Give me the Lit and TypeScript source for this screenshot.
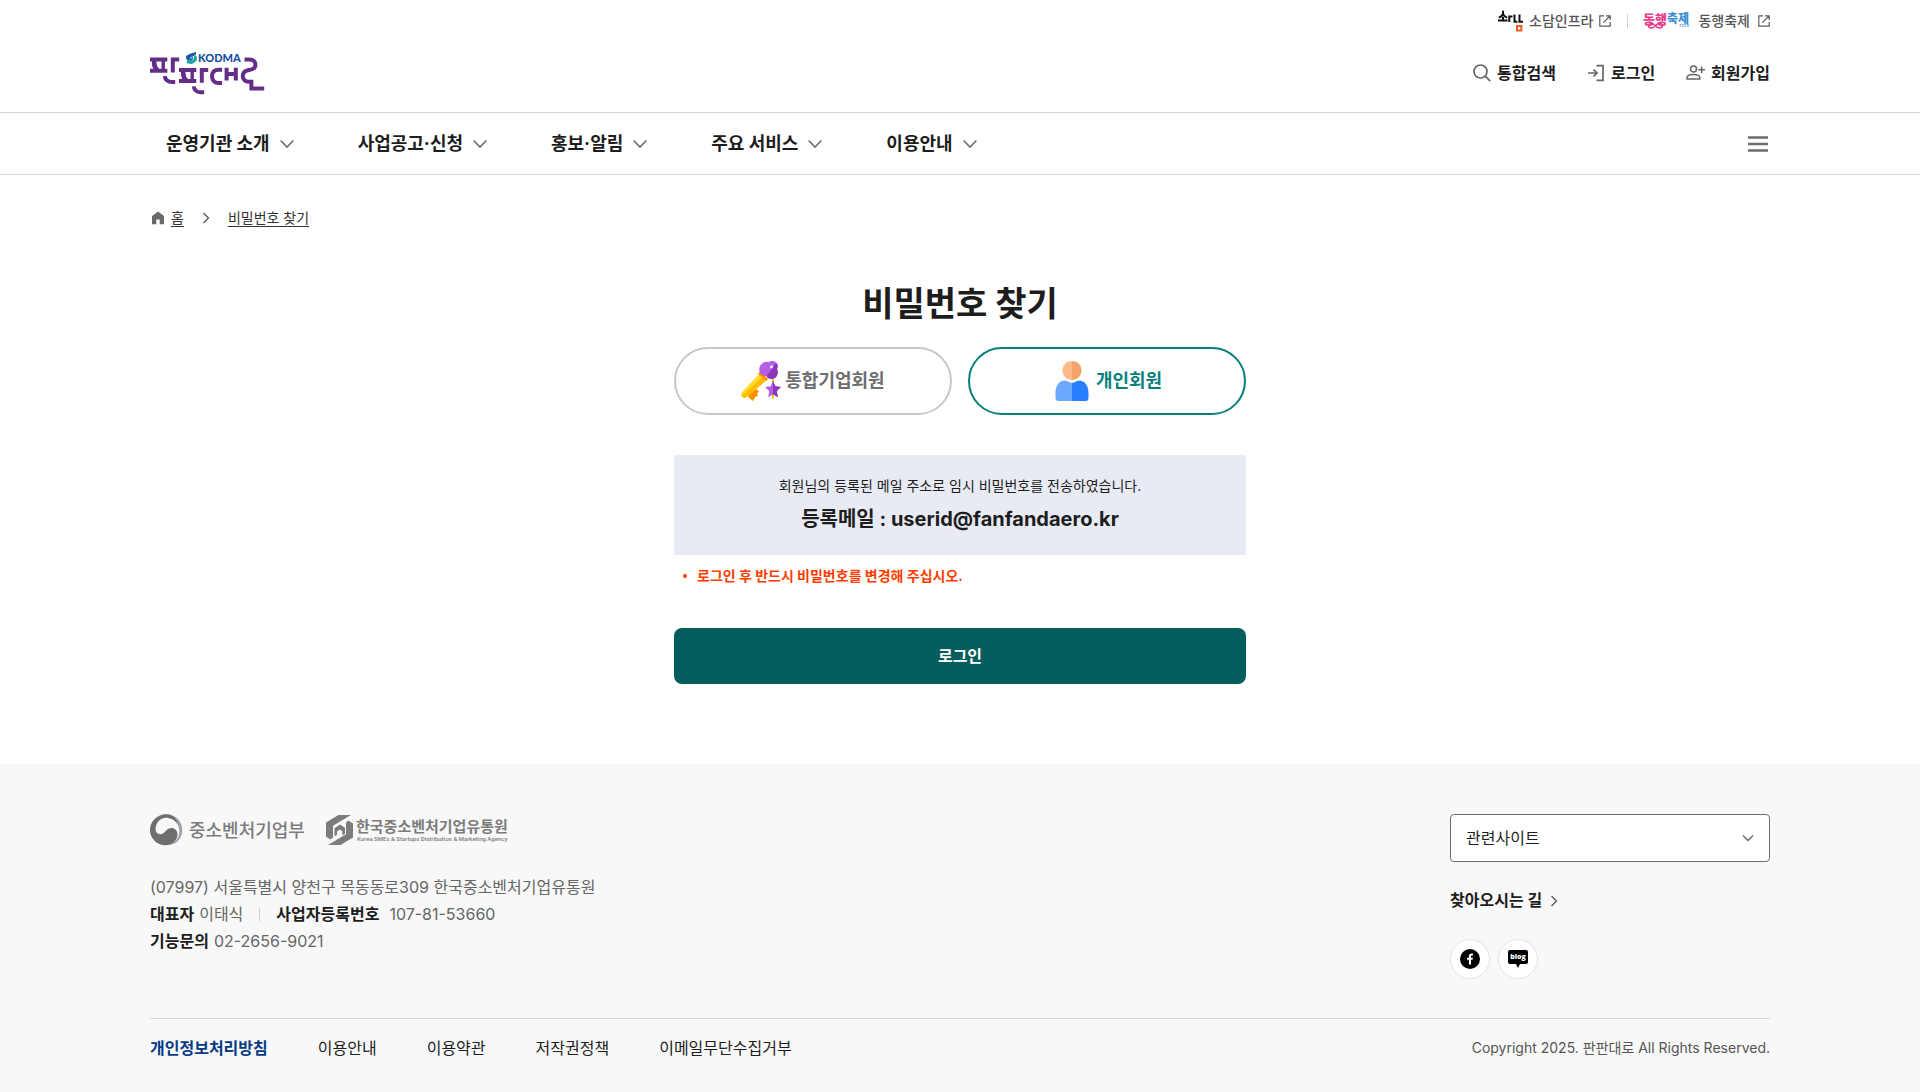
import { LitElement, html, svg, css } from "lit";
import { customElement, state } from "lit/decorators.js";
import { classMap } from "lit/directives/class-map.js";

const chevronDown = html`<svg width="14" height="16" viewBox="0 0 14 16" aria-hidden="true">
  <path d="M.6 4.500 7 11l6.400-6.500" fill="none" stroke="#6d6d6d" stroke-width="1.600" />
</svg>`;

const chevronRight = html`<svg width="12" height="14" viewBox="0 0 12 14" aria-hidden="true">
  <path d="M3.500 2l5 5-5 5" fill="none" stroke="#555" stroke-width="1.300" />
</svg>`;

const externalIcon = html`<svg width="12" height="12" viewBox="0 0 12 12" aria-hidden="true">
  <path d="M5 .8H.8v10.400h10.400V7M7 .8h4.200V5M11 1 4.400 7.600" fill="none" stroke="#5c5c5c" stroke-width="1.200" />
</svg>`;

/* One geometric "pan" block: two bars, a bowed stem, a straight stem and the side bracket. */
const panBlock = svg`
  <path d="M0 7.600h17.300M0 18.800h17.300" />
  <path d="M4.200 8v3c0 3 .8 5.500 3.600 7.800" stroke-width="4.600" />
  <path d="M13.200 8v10" stroke-width="3.400" />
  <path d="M22.800 20.500V7.600h6.400" />
  <path d="M14.800 24c.3 4 3.400 6 7 6h3.400" />`;

const brandLogo = html`<svg width="115" height="43" viewBox="0 0 115 43" role="img" aria-label="판판대로">
  <g fill="none" stroke="#652d87" stroke-width="4">
    <g>${panBlock}</g>
    <g transform="translate(29 10.300)">${panBlock}</g>
    <path d="M72 17.700h-3.500c-4 0-6.500 2.600-6.500 6.500s2.500 6.700 6.500 6.700H72" />
    <path d="M76.600 15.700v12.800M85.800 15.700v12.800M76.600 22h9" />
    <path d="M94.500 7.500h5c3.700 0 5.900 2.200 5.900 5.200 0 3.500-2.500 4.800-6 5.200-4.500.5-6.600 2.800-6.600 6.200 0 3.500 2.400 5.700 6 5.700h2.600v6.700h12.800" />
  </g>
  <path d="M40.500 1.500 46 0v2.600l-5.600 3.200v1.700L38 9.200l-2-2.600V4z" fill="#1b5dab" />
  <path d="M44.300 2.800 46.800 4.500v4L42 12l-5.300-.7v-2L42 8.200l2-1.600z" fill="#1ba59f" />
  <path d="M39.600 7.800 43 4.600v2.200l-3 2.600z" fill="#1b5dab" />
  <text class="kodma" x="48" y="10">KODMA</text>
</svg>`;

const sodamLogo = html`<svg width="25" height="22" viewBox="0 0 25 22" role="img" aria-label="소담">
  <path d="M5 .8v3C4.600 5.800 3 7 .8 7.600M5 3.800C5.600 5.800 7 7 9.200 7.600M5 7v3M0 10.500h9.600M11.300 12V6.400h3.200M16.500 4.500v7.200h3M21.500 4.500v7.200H25" fill="none" stroke="#111" stroke-width="2" />
  <path d="M19 16h4.400v4.400H19z" fill="none" stroke="#ee5b2b" stroke-width="2" />
</svg>`;

const festivalLogo = html`<svg width="46" height="18" viewBox="0 0 46 18" role="img" aria-label="동행축제 2025">
  <text class="fest pink" x="-1" y="12">동행</text>
  <text class="fest blue" x="23" y="11">축제</text>
  <path d="M11.500 13.700C9 10.500 4.500 10.800 4.500 13.700s4.500 3 7 0 7-2.800 7 0-4.500 3.200-7 0z" fill="none" stroke="#e83e8c" stroke-width="1.500" />
  <text class="fest-year" x="35" y="15">2025</text>
</svg>`;

const searchIcon = html`<svg width="18" height="18" viewBox="0 0 18 18" aria-hidden="true">
  <circle cx="7.500" cy="7.500" r="6.500" fill="none" stroke="#666" stroke-width="1.700" />
  <path d="m12.200 12.200 5 5" stroke="#666" stroke-width="1.700" />
</svg>`;

const loginIcon = html`<svg width="18" height="18" viewBox="0 0 18 18" aria-hidden="true">
  <path d="M9.500 1.700H16v14.600H9.500M1 9h9M6.500 5.500 10 9l-3.500 3.500" fill="none" stroke="#666" stroke-width="1.700" />
</svg>`;

const joinIcon = html`<svg width="19" height="18" viewBox="0 0 19 18" aria-hidden="true">
  <g fill="none" stroke="#666" stroke-width="1.500">
    <circle cx="7.500" cy="5" r="3" />
    <path d="M1 15v-1.300c0-2.200 3-3.200 6.400-3.200s6.400 1 6.400 3.200V15zM15.600 2.500v6.600M12.400 5.800h6.600" />
  </g>
</svg>`;

const homeIcon = html`<svg width="16" height="16" viewBox="0 0 16 16" aria-hidden="true">
  <path d="M8 1.500 14 6v8.300H9.700V9.500H6.300v4.800H2V6z" fill="#6a6a6a" />
</svg>`;

const keyIcon = html`<svg width="40" height="40" viewBox="0 0 40 40" aria-hidden="true">
  <path d="M13 26.500 18 30.500 16 33 17 34.800 14.500 36 11.800 40 6.800 35.500 8.500 32z" fill="#ff9100" />
  <path d="M18.500 12.500 26 18.500 5 36.200C3 37.500-1 35 .3 32z" fill="#ffda2d" />
  <path d="m22 15.500 4.500 3L5 36.500c-1.500 1-3.800 0-4.500-1.500z" fill="#fdbf00" />
  <path d="m17 12.500 8 7.500 2-2L19.500 10z" fill="#ff9100" />
  <rect x="31" y="17" width="2" height="21" rx="1" fill="#fdbf00" />
  <path d="M27.500 1.200c2-1.600 5.700-1.600 7.500.3 2 2 2 4.500 1 6.500 1.800 3.600.3 7.600-2.500 9.300-3.700 1.600-6.600.2-8-2.300-4 .2-7.200-2.700-7.300-6.600C18 3.800 23.500-.7 27.500 1.200z" fill="#b55fe6" />
  <path d="M35.200 1.700c2 2 1.800 4.500.8 6.300 1.800 3.600.3 7.600-2.500 9.300-3.700 1.600-6.600.2-8-2.300z" fill="#8c37b8" />
  <circle cx="30.500" cy="6" r="1.400" fill="#fff" />
  <path d="m32 20 2.400 5.300 5.600.8-4.200 4 1 6.200-4.800-3-4.800 3 1-6.200-4.200-4 5.600-.8z" fill="#b55fe6" />
  <path d="m32 20 2.400 5.300 5.600.8-4.200 4 1 6.200-4.800-3z" fill="#8c37b8" />
</svg>`;

const personIcon = html`<svg width="40" height="40" viewBox="0 0 40 40" aria-hidden="true">
  <path d="M20 0c-5.500 0-9.500 4.200-9.500 9.500S14.500 19 20 19z" fill="#fdba88" />
  <path d="M20 0c5.500 0 9.500 4.200 9.500 9.500S25.500 19 20 19z" fill="#f3a56c" />
  <path d="M20 22c-3 0-4-2.500-7-2.500-6 0-9.500 5.500-9.500 12.500v5c0 2 1 3 3 3H20z" fill="#6ba9ff" />
  <path d="M20 22c3 0 4-2.500 7-2.500 6 0 9.500 5.500 9.500 12.500v5c0 2-1 3-3 3H20z" fill="#2680ff" />
</svg>`;

const ministryLogo = html`<svg width="158" height="32" viewBox="0 0 158 32" role="img" aria-label="중소벤처기업부">
  <path d="M12 1.500C22 -2 32.500 5 32.300 16.500 32 25 26 30.500 19 31c7-2.500 10.500-8 10.300-14.500C29 8 21 2 12 1.500z" fill="#a3a3a3" />
  <path d="M16.500.3C7 .3 0 7.500 0 16s7 15.300 15.500 15.300c7 0 12-5 12-11 0-5-5-8-9-5.500-3.500 2.200-5 6-9 5.400C5.500 19.500 4.500 15 6.500 10.500 8.500 6 13 3.200 18 4c4.500.7 8 3 10 6.500C26.500 4.500 22.500.3 16.500.3z" fill="#6e6e6e" />
  <text class="ministry" x="39" y="23">중소벤처기업부</text>
</svg>`;

const agencyLogo = html`<svg width="183" height="32" viewBox="0 0 183 32" role="img" aria-label="한국중소벤처기업유통원">
  <path d="M12.500 1H25L7 11.800v11.700L4.500 25.500 0 22.500V8.500z" fill="#7c7c7c" />
  <path d="M14.500 31H2l18-10.800V8.500L22.500 6.500 27 9.500v14z" fill="#7c7c7c" />
  <path d="M8.500 14.200 14 10.500l5 3.300v6l-2.600 1.600v-4.200L13.800 15.500 11 17.200v3.600L8.500 22.400z" fill="#7c7c7c" />
  <text class="agency" x="30" y="18">한국중소벤처기업유통원</text>
  <text class="agency-en" x="31" y="27">Korea SMEs &amp; Startups Distribution &amp; Marketing Agency</text>
</svg>`;

const facebookIcon = html`<svg width="20" height="20" viewBox="0 0 20 20" aria-hidden="true">
  <circle cx="10" cy="10" r="10" fill="#000" />
  <path d="M8.900 15.500v-4.700H7V8.700h1.900V7.300c0-1.900 1-2.800 2.700-2.800.6 0 1 0 1.300.1v1.800h-.9c-.8 0-1 .4-1 1v1.300h1.900l-.3 2.100H11v4.700z" fill="#fff" />
</svg>`;

const blogIcon = html`<svg width="20" height="20" viewBox="0 0 20 20" aria-hidden="true">
  <path d="M2 1h16a2 2 0 0 1 2 2v10a2 2 0 0 1-2 2h-6l-2 4-2-4H2a2 2 0 0 1-2-2V3a2 2 0 0 1 2-2z" fill="#000" />
  <text class="blog" x="10" y="10" text-anchor="middle">blog</text>
</svg>`;

const MENU = ["운영기관 소개", "사업공고·신청", "홍보·알림", "주요 서비스", "이용안내"];
const POLICIES = ["개인정보처리방침", "이용안내", "이용약관", "저작권정책", "이메일무단수집거부"];
const MEMBER_TYPES = [
  { id: "company", label: "통합기업회원", icon: keyIcon },
  { id: "person", label: "개인회원", icon: personIcon },
];

@customElement("app-root")
export class AppRoot extends LitElement {
  @state() private memberType = "person";

  static styles = css`
    :host {
      display: block;
      font-family: Inter, "Noto Sans CJK KR", sans-serif;
      font-size: 16px;
      line-height: 24px;
      color: #1d1d1d;
      background: #fff;
    }
    * { box-sizing: border-box; }
    svg { display: block; flex: none; overflow: visible; }
    a { color: inherit; text-decoration: none; }
    button, select { font: inherit; color: inherit; cursor: pointer; }
    ul { list-style: none; margin: 0; padding: 0; }
    .wrap { max-width: 1680px; margin: 0 auto; padding: 0 30px; }

    .header { border-bottom: 1px solid #d6d6d6; padding-bottom: 8px; }
    .partners {
      display: flex; justify-content: flex-end; align-items: center;
      height: 42px; font-size: 14px; font-weight: 500; color: #555;
    }
    .partners a { display: flex; align-items: center; gap: 6px; }
    .partners .wide { gap: 8px; }
    .bar { width: 1px; height: 14px; background: #d0d0d0; margin: 0 16px; }
    .brand-row { display: flex; justify-content: space-between; align-items: center; height: 62px; }
    .tools { display: flex; gap: 31px; font-weight: 700; }
    .tools a { display: flex; align-items: center; gap: 6px; }

    .nav { border-bottom: 1px solid #d6d6d6; }
    .nav .wrap { display: flex; justify-content: space-between; align-items: center; height: 61px; }
    .menu { display: flex; gap: 32px; }
    .menu button {
      display: flex; align-items: center; gap: 10px; padding: 0 16px;
      border: 0; background: none; font-size: 18px; font-weight: 700;
    }
    .all { border: 0; background: none; padding: 0 2px; }

    .crumbs {
      display: flex; align-items: center; padding-top: 32px;
      font-size: 14px; line-height: 22px; color: #333;
    }
    .crumbs a { display: flex; align-items: center; gap: 5px; }
    .crumbs span { text-decoration: underline; text-underline-offset: 3px; }
    .crumbs .next { margin: 0 16px; }

    .panel { max-width: 572px; margin: 0 auto; padding: 48px 0 80px; }
    h1 { margin: 0 0 16px; font-size: 34px; line-height: 54px; font-weight: 700; text-align: center; }
    .tabs { display: grid; grid-template-columns: 1fr 1fr; gap: 16px; margin-bottom: 40px; }
    .tab {
      display: flex; align-items: center; justify-content: center; gap: 4px;
      height: 68px; border: 2px solid #c8c8c8; border-radius: 34px;
      background: #fff; color: #6e6e6e; font-size: 18px; font-weight: 700;
    }
    .tab.on { border-color: #087f7c; color: #087f7c; }
    .result { background: #e8ebf3; padding: 17px 16px; text-align: center; }
    .result p { margin: 0; font-size: 14px; line-height: 28px; }
    .result strong { display: block; font-size: 20px; line-height: 38px; font-weight: 700; }
    .notes { margin: 9px 0 40px; padding-left: 9px; }
    .notes li {
      display: flex; align-items: center; gap: 10px;
      color: #ff3d00; font-size: 14px; line-height: 24px; font-weight: 700;
    }
    .notes li::before { content: ""; width: 4px; height: 4px; border-radius: 50%; background: #ff3d00; }
    .primary {
      display: block; border-radius: 8px; background: #065d5d; color: #fff;
      line-height: 56px; font-weight: 700; text-align: center;
    }

    .footer { background: #f8f8f8; padding: 50px 0 31px; }
    .foot-top { display: flex; justify-content: space-between; padding-bottom: 39px; border-bottom: 1px solid #d6d6d6; }
    .logos { display: flex; gap: 18px; margin-bottom: 28px; }
    address { font-style: normal; line-height: 27px; color: #666; }
    address div { display: flex; align-items: center; gap: 5px; }
    address b { color: #1d1d1d; }
    address .bar { height: 13px; margin: 0 11px; }
    address .reg { margin-right: 5px; }
    .side { display: flex; flex-direction: column; align-items: flex-start; gap: 26px; width: 320px; }
    .pick { display: grid; width: 100%; align-items: center; }
    .pick select, .pick svg { grid-area: 1 / 1; }
    .pick svg { justify-self: end; margin-right: 16px; pointer-events: none; }
    .pick select {
      appearance: none; height: 48px; padding: 0 15px;
      border: 1px solid #6d6d6d; border-radius: 4px; background: #fff;
    }
    .way { display: flex; align-items: center; gap: 6px; font-weight: 700; line-height: 25px; }
    .social { display: flex; gap: 8px; }
    .social a {
      display: grid; place-items: center; width: 40px; height: 40px;
      border: 1px solid #e4e4e4; border-radius: 50%; background: #fff;
    }
    .foot-bottom { display: flex; justify-content: space-between; align-items: center; padding-top: 16px; line-height: 26px; }
    .policies { display: flex; gap: 50px; }
    .policies .privacy { color: #063a85; font-weight: 700; }
    .copy { font-size: 14px; color: #555; }

    text { font-family: Inter, "Noto Sans CJK KR", sans-serif; }
    .kodma { font: 900 11px Lato, sans-serif; fill: #164f9f; }
    .fest { font-size: 13px; font-weight: 900; }
    .pink { fill: #e83e8c; }
    .blue { fill: #3f8fcd; font-size: 12px; }
    .fest-year { font-size: 4px; fill: #3f8fcd; }
    .ministry { font-size: 18px; font-weight: 500; fill: #7c7c7c; }
    .agency { font-size: 15px; font-weight: 700; fill: #7c7c7c; }
    .agency-en { font: 500 6px Roboto, sans-serif; fill: #7c7c7c; }
    .blog { font: 800 7px "Open Sans", sans-serif; fill: #fff; }
  `;

  render() {
    return html`
      <header class="header">
        <div class="wrap">
          <div class="partners">
            <a href="#sodam">${sodamLogo}<span>소담인프라</span>${externalIcon}</a>
            <i class="bar"></i>
            <a class="wide" href="#festival">${festivalLogo}<span>동행축제</span>${externalIcon}</a>
          </div>
          <div class="brand-row">
            <a href="#home">${brandLogo}</a>
            <div class="tools">
              <a href="#search">${searchIcon}통합검색</a>
              <a href="#login">${loginIcon}로그인</a>
              <a href="#join">${joinIcon}회원가입</a>
            </div>
          </div>
        </div>
      </header>

      <nav class="nav">
        <div class="wrap">
          <div class="menu">
            ${MENU.map((name) => html`<button type="button">${name}${chevronDown}</button>`)}
          </div>
          <button class="all" type="button" aria-label="전체메뉴">
            <svg width="20" height="18" viewBox="0 0 20 18"><path d="M0 2.500h20M0 9h20M0 15.500h20" stroke="#6d6d6d" stroke-width="2.400" /></svg>
          </button>
        </div>
      </nav>

      <main class="wrap">
        <nav class="crumbs">
          <a href="#home">${homeIcon}<span>홈</span></a>
          <div class="next">${chevronRight}</div>
          <a href="#password"><span>비밀번호 찾기</span></a>
        </nav>
        <section class="panel">
          <h1>비밀번호 찾기</h1>
          <div class="tabs" role="tablist">
            ${MEMBER_TYPES.map(
              (t) => html`<button
                type="button"
                role="tab"
                aria-selected=${this.memberType === t.id}
                class=${classMap({ tab: true, on: this.memberType === t.id })}
                @click=${() => (this.memberType = t.id)}
              >${t.icon}${t.label}</button>`,
            )}
          </div>
          <div class="result">
            <p>회원님의 등록된 메일 주소로 임시 비밀번호를 전송하였습니다.</p>
            <strong>등록메일 : userid@fanfandaero.kr</strong>
          </div>
          <ul class="notes"><li>로그인 후 반드시 비밀번호를 변경해 주십시오.</li></ul>
          <a class="primary" href="#login">로그인</a>
        </section>
      </main>

      <footer class="footer">
        <div class="wrap">
          <div class="foot-top">
            <div>
              <div class="logos">${ministryLogo}${agencyLogo}</div>
              <address>
                <div>(07997) 서울특별시 양천구 목동동로309 한국중소벤처기업유통원</div>
                <div><b>대표자</b>이태식<i class="bar"></i><b class="reg">사업자등록번호</b>107-81-53660</div>
                <div><b>기능문의</b>02-2656-9021</div>
              </address>
            </div>
            <div class="side">
              <div class="pick">
                <select id="related" aria-label="관련사이트"><option>관련사이트</option></select>
                <svg width="12" height="12" viewBox="0 0 12 12" aria-hidden="true"><path d="m1 3.500 5 5 5-5" fill="none" stroke="#6d6d6d" stroke-width="1.500" /></svg>
              </div>
              <a class="way" href="#map">찾아오시는 길${chevronRight}</a>
              <div class="social">
                <a href="#facebook" aria-label="페이스북">${facebookIcon}</a>
                <a href="#blog" aria-label="블로그">${blogIcon}</a>
              </div>
            </div>
          </div>
          <div class="foot-bottom">
            <div class="policies">
              ${POLICIES.map((name, i) => html`<a href="#policy" class=${classMap({ privacy: i === 0 })}>${name}</a>`)}
            </div>
            <span class="copy">Copyright 2025. 판판대로 All Rights Reserved.</span>
          </div>
        </div>
      </footer>
    `;
  }
}
